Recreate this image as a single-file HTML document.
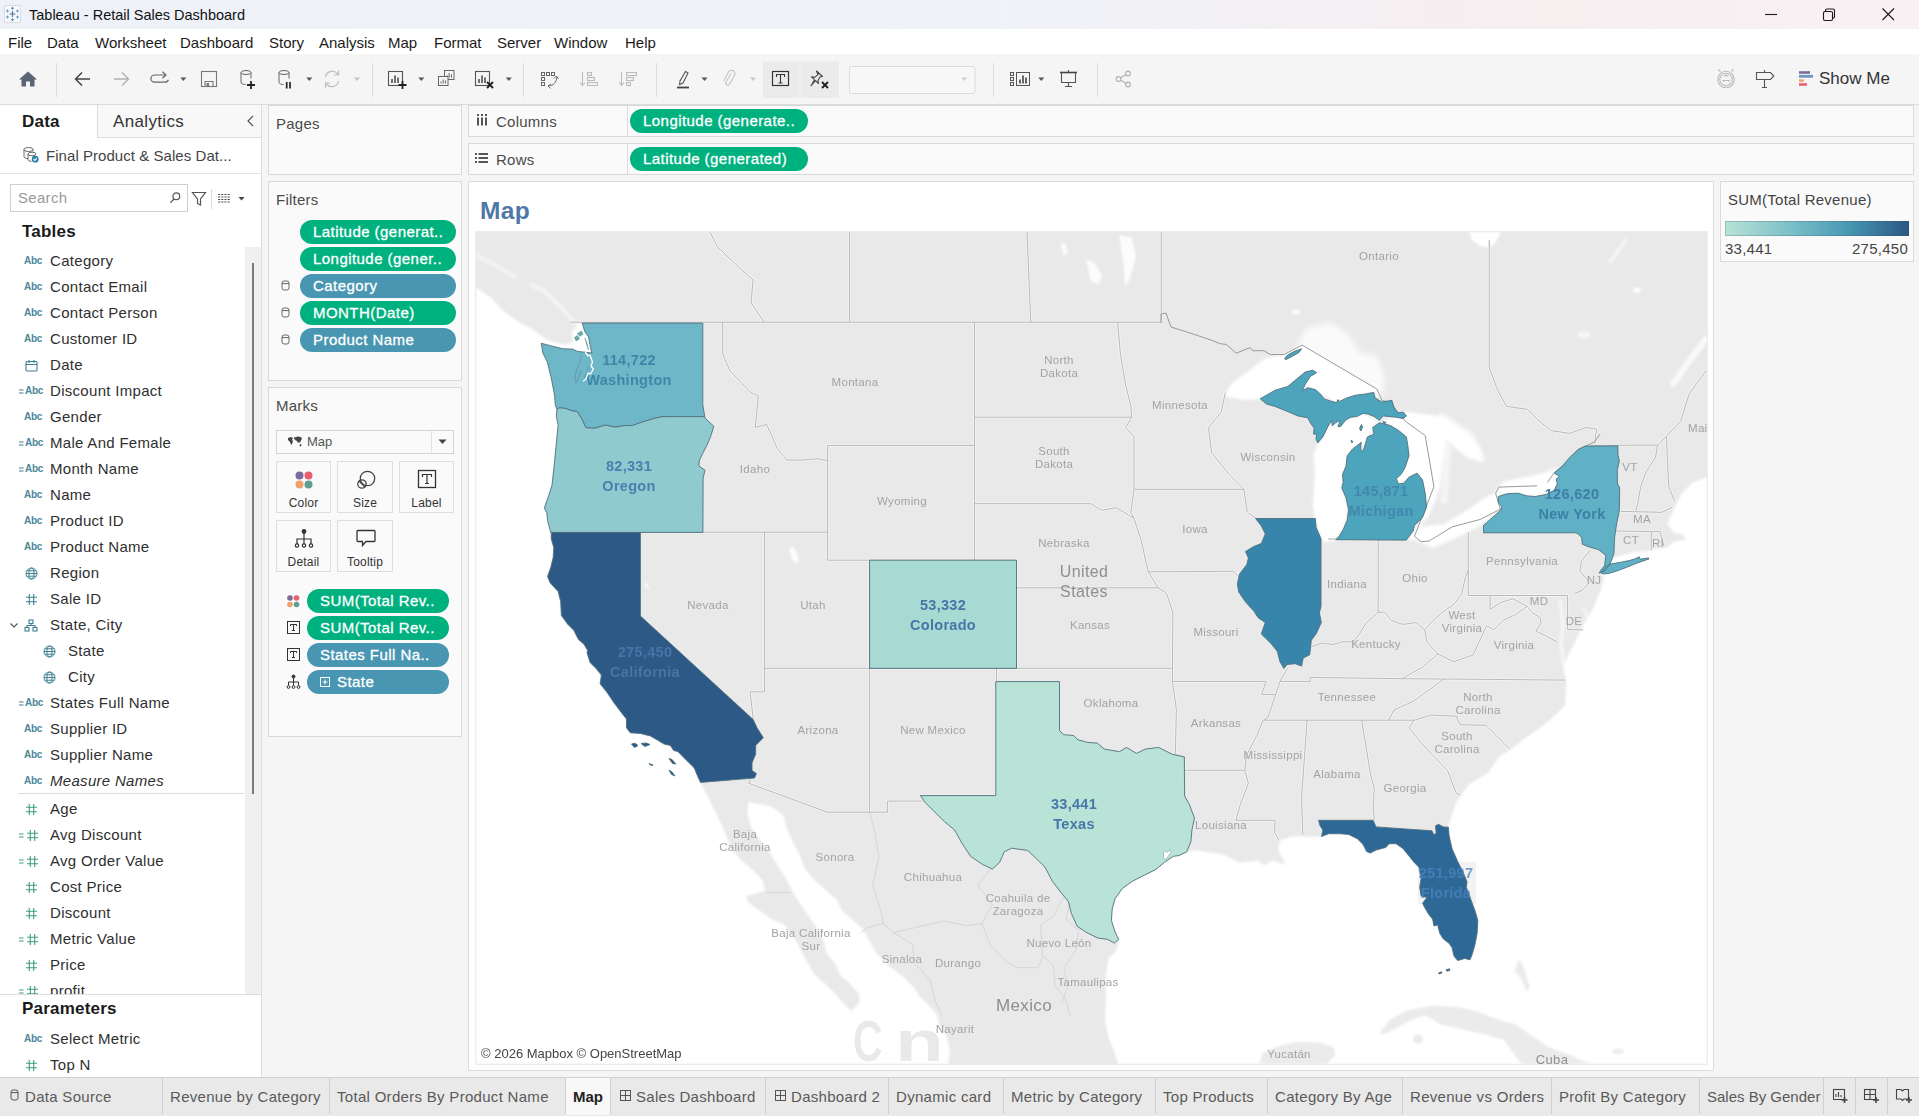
<!DOCTYPE html><html><head><meta charset="utf-8"><title>Tableau - Retail Sales Dashboard</title><style>
*{box-sizing:border-box;margin:0;padding:0}
html,body{width:1919px;height:1116px;overflow:hidden;background:#f5f5f5;font-family:"Liberation Sans",sans-serif;color:#333}
.a{position:absolute;white-space:nowrap}
.t15{font-size:15px;letter-spacing:.25px;line-height:18px}
#title{left:0;top:0;width:1919px;height:29px;background:linear-gradient(90deg,#eef2f8 0%,#eff3f9 50%,#f7eef0 80%,#f9f1f3 100%)}
#menu{left:0;top:29px;width:1919px;height:25px;background:#fff}
#menu span{position:absolute;top:5px;font-size:15px;color:#1b1b1b;letter-spacing:0}
#tool{left:0;top:54px;width:1919px;height:51px;background:#f5f5f5;border-bottom:1px solid #dcdcdc}
#left{left:0;top:105px;width:262px;height:972px;background:#fff;border-right:1px solid #dedede}
.card{background:#fafafa;border:1px solid #d9d9d9}
.pill{height:24px;border-radius:12px;color:#fff;font-size:15px;letter-spacing:.45px;line-height:23px;padding-left:13px;overflow:hidden;-webkit-text-stroke:.3px #fff}
.g{background:#00b180}.b{background:#4996b2}
.fi{position:absolute;left:0;height:26px;width:244px}
.fi .n{position:absolute;left:50px;top:4.5px;font-size:15px;letter-spacing:.3px;line-height:18px;color:#2f2f2f}
.abc{position:absolute;left:24px;top:7.5px;font-size:10px;font-weight:bold;color:#4a879a;letter-spacing:-.3px;line-height:12px}
.eq{position:absolute;left:19px;top:4px;font-size:9px;font-weight:bold;color:#3e7f93;line-height:12px}
.hash{position:absolute;left:25px;top:2px;font-size:15px;line-height:18px}
.btab{position:absolute;top:0;height:36px;border-right:1px solid #cfcfcf;font-size:15px;letter-spacing:.3px;line-height:38px;color:#5a5a5a;padding-left:7px}
.mbtn{position:absolute;width:55px;height:52px;background:#fafafa;border:1px solid #dedede;font-size:12px;text-align:center;color:#333}
.mbtn span{position:absolute;left:0;right:0;bottom:2px;line-height:14px;letter-spacing:.2px}
</style></head><body>
<div id="title" class="a">
<svg class="a" style="left:4px;top:5px" width="18" height="18" viewBox="0 0 18 18"><rect x="0.5" y="0.5" width="16" height="17" fill="#f6f8fb" stroke="#d9dde3"/><g stroke="#4a7aa8" stroke-width="1.2" fill="none"><path d="M8.5 6v6M5.5 9h6"/><path d="M8.5 1.8v3M7 3.3h3M8.5 13.2v3M7 14.7h3" stroke="#5b8fbf" stroke-width="1"/><path d="M3.5 4.5v3M2 6h3M13.5 4.5v3M12 6h3M3.5 10.5v3M2 12h3M13.5 10.5v3M12 12h3" stroke="#6aa0c8" stroke-width="1"/></g></svg>
<span class="a" style="left:29px;top:6px;font-size:14.5px;color:#111;line-height:18px">Tableau - Retail Sales Dashboard</span>
<svg class="a" style="left:1760px;top:4px" width="150" height="22" viewBox="0 0 150 22" fill="none" stroke="#1a1a1a" stroke-width="1.1"><path d="M5 10.5h12"/><rect x="63.5" y="7.5" width="9" height="9" rx="1.5"/><path d="M65.5 7.5v-1a1.5 1.5 0 0 1 1.5-1.5h6a1.5 1.5 0 0 1 1.5 1.5v6a1.5 1.5 0 0 1-1.5 1.5h-.5"/><path d="M122.5 4.5l11.5 11.5M134 4.5l-11.5 11.5"/></svg>
</div>
<div id="menu" class="a">
<span style="left:8px">File</span>
<span style="left:47px">Data</span>
<span style="left:95px">Worksheet</span>
<span style="left:180px">Dashboard</span>
<span style="left:269px">Story</span>
<span style="left:319px">Analysis</span>
<span style="left:388px">Map</span>
<span style="left:434px">Format</span>
<span style="left:497px">Server</span>
<span style="left:554px">Window</span>
<span style="left:625px">Help</span>
</div>
<div id="tool" class="a">
<svg class="a" style="left:0;top:0" width="1919" height="51" viewBox="0 54 1919 51" fill="none" stroke-linecap="butt">
<rect x="763" y="61.500" width="37" height="36.500" fill="#ebebeb"/><rect x="800" y="61.500" width="39" height="36.500" fill="#ebebeb"/><path d="M800 61.500v36.500" stroke="#f3f3f3"/>
<path d="M56.5 63v34" stroke="#dcdcdc" stroke-width="1"/>
<path d="M372.5 63v34" stroke="#dcdcdc" stroke-width="1"/>
<path d="M523.5 63v34" stroke="#dcdcdc" stroke-width="1"/>
<path d="M656.5 63v34" stroke="#dcdcdc" stroke-width="1"/>
<path d="M993.5 63v34" stroke="#dcdcdc" stroke-width="1"/>
<path d="M1097.5 63v34" stroke="#dcdcdc" stroke-width="1"/>
<path d="M28 71.500l-9 8h2.500v7h4.500v-5h4v5h4.500v-7h2.500z" fill="#5b6573"/>
<path d="M90 79h-14.500M82 72.500L75.500 79l6.500 6.500" stroke="#444" stroke-width="1.500"/>
<path d="M114 79h14.500M122 72.500l6.500 6.500-6.500 6.500" stroke="#b3b3b3" stroke-width="1.500"/>
<path d="M165.500 75h-11a3.600 3.600 0 0 0 0 7.200h10.500a3.600 3.600 0 0 0 3.400-2.400" stroke="#666" stroke-width="1.200"/><path d="M162.500 71.800l3.500 3.200-3.500 3.200" stroke="#666" stroke-width="1.200"/>
<path d="M180.3 77.5h6l-3 3.600z" fill="#555"/>
<rect x="201.500" y="71.500" width="15" height="15" stroke="#777" stroke-width="1.100"/><path d="M205 86.500v-5h8v5" stroke="#777" stroke-width="1.100"/><rect x="206.500" y="83" width="2.500" height="3" fill="#777"/>
<ellipse cx="246" cy="72.5" rx="5" ry="2" stroke="#666" stroke-width="1"/><path d="M241 72.5v10c0 1.200 2 2 4.500 2M251 72.5v6" stroke="#666" stroke-width="1"/>
<path d="M251 81v8M247 85h8" stroke="#222" stroke-width="1.800"/>
<ellipse cx="284" cy="72.5" rx="5" ry="2" stroke="#666" stroke-width="1"/><path d="M279 72.5v10c0 1.200 2 2 4.500 2M289 72.5v6" stroke="#666" stroke-width="1"/>
<path d="M286.700 82v6.500M290 82v6.500" stroke="#222" stroke-width="1.700"/>
<path d="M306.3 77.5h6l-3 3.600z" fill="#555"/>
<path d="M325.500 77a6.800 6.800 0 0 1 12.500-2.500M338.500 81a6.800 6.800 0 0 1-12.500 2.500" stroke="#bcbcbc" stroke-width="1.200"/><path d="M338.500 70.500v4.500h-4.500M325.500 87.500v-4.500h4.500" stroke="#bcbcbc" stroke-width="1.200"/>
<path d="M354 77.5h6l-3 3.600z" fill="#c4c4c4"/>
<rect x="388.500" y="71.500" width="14" height="14" stroke="#555" stroke-width="1.100"/><path d="M392 83v-4M395 83v-7.500M398 83v-5.500" stroke="#444" stroke-width="1.500"/><path d="M402.500 81v8M398.500 85h8" stroke="#222" stroke-width="1.800"/>
<path d="M418.3 77.5h6l-3 3.600z" fill="#555"/>
<rect x="444.500" y="70.500" width="9.500" height="9" fill="#f5f5f5" stroke="#666" stroke-width="1"/><path d="M447 77.500v-2M449.200 77.500v-4.500M451.500 77.500v-3" stroke="#666" stroke-width="1"/><rect x="438.500" y="76.500" width="9.500" height="9" fill="#f5f5f5" stroke="#666" stroke-width="1"/><path d="M441 83.500v-2M443.200 83.500v-4M445.500 83.500v-3" stroke="#666" stroke-width="1"/>
<rect x="475.500" y="71.500" width="14" height="14" stroke="#555" stroke-width="1.100"/><path d="M479 83v-4M482 83v-7.500M485 83v-5.500" stroke="#444" stroke-width="1.500"/><path d="M487 82l6 6M493 82l-6 6" stroke="#222" stroke-width="1.800"/>
<path d="M505.8 77.5h6l-3 3.600z" fill="#555"/>
<g stroke="#666" stroke-width="1"><rect x="541.500" y="72.500" width="3" height="3"/><rect x="546.500" y="72.500" width="3" height="3"/><rect x="551.500" y="72.500" width="3" height="3"/><rect x="541.500" y="77.500" width="3" height="3"/><rect x="541.500" y="82.500" width="3" height="3"/><path d="M556.500 77.500c0 5-3 8-8 8.500" /><path d="M554 78.500l2.500-2.500 2 3M551 84l-3 2 2.500 2.500"/></g>
<g stroke="#bcbcbc" stroke-width="1.100"><path d="M582.500 72v13M580 82.500l2.500 3 2.500-3"/><rect x="587.500" y="72.500" width="4" height="3"/><rect x="587.500" y="77.500" width="7" height="3"/><rect x="587.500" y="82.500" width="10" height="3"/></g>
<g stroke="#bcbcbc" stroke-width="1.100"><path d="M621.500 72v13M619 82.500l2.500 3 2.500-3"/><rect x="626.500" y="72.500" width="10" height="3"/><rect x="626.500" y="77.500" width="7" height="3"/><rect x="626.500" y="82.500" width="4" height="3"/></g>
<path d="M685.500 71.500l2.500 1.500-5 10-3.500 1.500.500-3.500z" stroke="#555" stroke-width="1.100"/><path d="M677 87.500h12" stroke="#444" stroke-width="1.800"/>
<path d="M701.5 77.5h6l-3 3.600z" fill="#555"/>
<path d="M731 73.500l-5 8.500a2 2 0 0 0 3.500 2l5-8.500a3.400 3.400 0 0 0-6-3.400l-5 8.800" stroke="#c2c2c2" stroke-width="1.100"/>
<path d="M750 77.5h6l-3 3.600z" fill="#c8c8c8"/>
<rect x="772.500" y="71.500" width="16" height="14" stroke="#333" stroke-width="1.200"/><path d="M776.500 77v-2.500h8v2.500M780.500 74.500v8.500M778.500 83h4" stroke="#333" stroke-width="1.100"/>
<path d="M816.500 71l6 5.500-2.500.500-2 3.500.500 3-3-2.800-4.500 5 .300-.200 3.200-5.800-3-2.800 3.500.300 3-2.500z" stroke="#444" stroke-width="1.100" stroke-linejoin="round"/><path d="M822 82l6 6M828 82l-6 6" stroke="#222" stroke-width="1.800"/>
<rect x="849.500" y="66.500" width="125.500" height="27" rx="2" fill="#f7f7f7" stroke="#dadada"/>
<path d="M961.3 77.5h6l-3 3.600z" fill="#cfcfcf"/>
<g stroke="#555" stroke-width="1"><rect x="1010.500" y="72.500" width="3" height="3"/><rect x="1010.500" y="77.500" width="3" height="3"/><rect x="1010.500" y="82.500" width="3" height="3"/><rect x="1016.500" y="72.500" width="13" height="13"/></g><path d="M1020 83.500v-4M1023 83.500v-8M1026 83.500v-6" stroke="#444" stroke-width="1.600"/>
<path d="M1038.3 77.5h6l-3 3.600z" fill="#555"/>
<path d="M1060 72.500h17" stroke="#444" stroke-width="1.600"/><path d="M1061.500 73v9.500h14v-9.500M1068.500 82.500v4M1065 86.500h7M1068.500 70v2.500" stroke="#555" stroke-width="1.100"/>
<g stroke="#b0b0b0" stroke-width="1.100"><circle cx="1118.500" cy="79" r="2.400"/><circle cx="1128" cy="73.500" r="2.400"/><circle cx="1128" cy="84.500" r="2.400"/><path d="M1120.600 77.800l5.300-3.100M1120.600 80.200l5.300 3.100"/></g>
<g stroke="#b8b8b8" stroke-width="1.100"><circle cx="1726" cy="79.500" r="8.200"/><circle cx="1726" cy="79.500" r="6.200"/><path d="M1720.500 71.500l-2-2M1731.500 71.500l2-2M1722.500 80.500h7M1723.500 80v2M1728.500 80v2M1724 76.500c1-1.500 3-1.500 4 0"/></g>
<path d="M1756.500 72.500h14l3.300 3.500-3.300 3.500h-14zM1764.500 70v2.500M1764.500 79.500v8M1762 87.500h5" stroke="#555" stroke-width="1.100"/>
<rect x="1799" y="71.200" width="11" height="2.600" fill="#7b6b99"/><rect x="1799" y="74.900" width="14" height="2.800" fill="#6e94c4"/><rect x="1799" y="79.400" width="4.800" height="2.400" fill="#f0a06a"/><rect x="1799" y="83.200" width="8" height="2.600" fill="#e8606f"/>
</svg>
<span class="a" style="left:1819px;top:15px;font-size:17px;color:#333;line-height:20px">Show Me</span>
</div>
<div id="left" class="a">
<span class="a" style="left:22px;top:7px;font-size:17px;font-weight:bold;color:#1a1a1a;line-height:20px;letter-spacing:.2px">Data</span>
<div class="a" style="left:97px;top:0;width:165px;height:33px;background:#f8f8f8;border:1px solid #dcdcdc;border-top:none"></div>
<span class="a" style="left:113px;top:7px;font-size:17px;color:#333;line-height:20px;letter-spacing:.35px">Analytics</span>
<svg class="a" style="left:245px;top:9px" width="10" height="14" viewBox="0 0 10 14" fill="none" stroke="#555" stroke-width="1.2"><path d="M8 2L3 7l5 5"/></svg>
<svg class="a" style="left:22px;top:41px" width="18" height="18" viewBox="0 0 18 18" fill="none" stroke="#666" stroke-width="1"><ellipse cx="6.5" cy="3.5" rx="4.5" ry="2"/><path d="M2 3.5v7c0 1 1.5 2 4 2M11 3.5v2"/><ellipse cx="10" cy="8" rx="4" ry="1.8"/><path d="M6 8v5.5c0 1 1.5 1.8 3.5 1.8"/><circle cx="13.2" cy="13.2" r="3.4" fill="#2e7fa8" stroke="none"/><path d="M11.6 13.2l1.2 1.2 2-2.2" stroke="#fff" stroke-width="1.1"/></svg>
<span class="a" style="left:46px;top:42px;font-size:15px;color:#444;line-height:18px;letter-spacing:.05px">Final Product &amp; Sales Dat...</span>
<div class="a" style="left:0;top:68px;width:261px;height:1px;background:#e3e3e3"></div>
<div class="a" style="left:10px;top:79px;width:178px;height:28px;border:1px solid #cfcfcf;background:#fff"></div>
<span class="a" style="left:18px;top:84px;font-size:15px;color:#9a9a9a;line-height:18px;letter-spacing:.3px">Search</span>
<svg class="a" style="left:168px;top:86px" width="14" height="14" viewBox="0 0 14 14" fill="none" stroke="#555" stroke-width="1.2"><circle cx="8.3" cy="5.3" r="3.4"/><path d="M6 8L2.3 11.8"/></svg>
<svg class="a" style="left:190px;top:84px" width="60" height="20" viewBox="0 0 60 20" fill="none" stroke="#555" stroke-width="1.2"><path d="M2.5 3.5h13l-5 6.5v6l-3-1.5v-4.5z"/><path d="M21.5 0v20" stroke="#ddd"/><g stroke="#555" stroke-width="1"><path d="M28 5.5h12M28 8h12M28 10.5h12M28 13h12" stroke-dasharray="2.2 1"/></g><path d="M48.5 8h6l-3 3.5z" fill="#444" stroke="none"/></svg>
<span class="a" style="left:22px;top:117px;font-size:17px;font-weight:bold;color:#1a1a1a;line-height:20px;letter-spacing:.2px">Tables</span>
<div class="a" style="left:245px;top:142px;width:16px;height:747px;background:#f0f0f0"></div>
<div class="a" style="left:252px;top:158px;width:2px;height:531px;background:#7a7a7a"></div>
<div class="fi" style="top:142px"><span class="abc">Abc</span><span class="n" style="left:50px;">Category</span></div>
<div class="fi" style="top:168px"><span class="abc">Abc</span><span class="n" style="left:50px;">Contact Email</span></div>
<div class="fi" style="top:194px"><span class="abc">Abc</span><span class="n" style="left:50px;">Contact Person</span></div>
<div class="fi" style="top:220px"><span class="abc">Abc</span><span class="n" style="left:50px;">Customer ID</span></div>
<div class="fi" style="top:246px"><svg style="position:absolute;left:25px;top:7.5px" width="13" height="13" viewBox="0 0 13 13" fill="none" stroke="#3e7f93" stroke-width="1.1"><rect x="1" y="2.5" width="11" height="9.5" rx="1"/><path d="M1 5.5h11M4 1v3M9 1v3"/></svg><span class="n" style="left:50px;">Date</span></div>
<div class="fi" style="top:272px"><svg style="position:absolute;left:19px;top:11.5px" width="5" height="5" viewBox="0 0 5 5" stroke="#3e7f93" stroke-width="1.2"><path d="M0 1h4.5M0 4h4.5"/></svg><span class="abc" style="left:25px">Abc</span><span class="n" style="left:50px;">Discount Impact</span></div>
<div class="fi" style="top:298px"><span class="abc">Abc</span><span class="n" style="left:50px;">Gender</span></div>
<div class="fi" style="top:324px"><svg style="position:absolute;left:19px;top:11.5px" width="5" height="5" viewBox="0 0 5 5" stroke="#3e7f93" stroke-width="1.2"><path d="M0 1h4.5M0 4h4.5"/></svg><span class="abc" style="left:25px">Abc</span><span class="n" style="left:50px;">Male And Female</span></div>
<div class="fi" style="top:350px"><svg style="position:absolute;left:19px;top:11.5px" width="5" height="5" viewBox="0 0 5 5" stroke="#3e7f93" stroke-width="1.2"><path d="M0 1h4.5M0 4h4.5"/></svg><span class="abc" style="left:25px">Abc</span><span class="n" style="left:50px;">Month Name</span></div>
<div class="fi" style="top:376px"><span class="abc">Abc</span><span class="n" style="left:50px;">Name</span></div>
<div class="fi" style="top:402px"><span class="abc">Abc</span><span class="n" style="left:50px;">Product ID</span></div>
<div class="fi" style="top:428px"><span class="abc">Abc</span><span class="n" style="left:50px;">Product Name</span></div>
<div class="fi" style="top:454px"><svg style="position:absolute;left:25px;top:7.5px" width="13" height="13" viewBox="0 0 13 13" fill="none" stroke="#3e7f93" stroke-width="1"><circle cx="6.5" cy="6.5" r="5.5"/><ellipse cx="6.5" cy="6.5" rx="2.6" ry="5.5"/><path d="M1 6.5h11M1.8 3.8h9.4M1.8 9.2h9.4"/></svg><span class="n" style="left:50px;">Region</span></div>
<div class="fi" style="top:480px"><svg style="position:absolute;left:25px;top:7.5px" width="13" height="13" viewBox="0 0 13 13" fill="none" stroke="#3e7f93" stroke-width="1.1"><path d="M4.3 1v11M8.7 1v11M1 4.3h11M1 8.7h11"/></svg><span class="n" style="left:50px;">Sale ID</span></div>
<div class="fi" style="top:506px"><svg style="position:absolute;left:24px;top:7.5px" width="14" height="13" viewBox="0 0 14 13" fill="none" stroke="#3e7f93" stroke-width="1.1"><rect x="5" y="1" width="4" height="3.5"/><rect x="1" y="8.5" width="4" height="3.5"/><rect x="9" y="8.5" width="4" height="3.5"/><path d="M7 4.5v2M3 8.5v-2h8v2"/></svg><svg style="position:absolute;left:9px;top:10.5px" width="10" height="7" viewBox="0 0 10 7" fill="none" stroke="#555" stroke-width="1.1"><path d="M1.5 1.5L5 5l3.5-3.5"/></svg><span class="n" style="left:50px;">State, City</span></div>
<div class="fi" style="top:532px"><svg style="position:absolute;left:43px;top:7.5px" width="13" height="13" viewBox="0 0 13 13" fill="none" stroke="#3e7f93" stroke-width="1"><circle cx="6.5" cy="6.5" r="5.5"/><ellipse cx="6.5" cy="6.5" rx="2.6" ry="5.5"/><path d="M1 6.5h11M1.8 3.8h9.4M1.8 9.2h9.4"/></svg><span class="n" style="left:68px;">State</span></div>
<div class="fi" style="top:558px"><svg style="position:absolute;left:43px;top:7.5px" width="13" height="13" viewBox="0 0 13 13" fill="none" stroke="#3e7f93" stroke-width="1"><circle cx="6.5" cy="6.5" r="5.5"/><ellipse cx="6.5" cy="6.5" rx="2.6" ry="5.5"/><path d="M1 6.5h11M1.8 3.8h9.4M1.8 9.2h9.4"/></svg><span class="n" style="left:68px;">City</span></div>
<div class="fi" style="top:584px"><svg style="position:absolute;left:19px;top:11.5px" width="5" height="5" viewBox="0 0 5 5" stroke="#3e7f93" stroke-width="1.2"><path d="M0 1h4.5M0 4h4.5"/></svg><span class="abc" style="left:25px">Abc</span><span class="n" style="left:50px;">States Full Name</span></div>
<div class="fi" style="top:610px"><span class="abc">Abc</span><span class="n" style="left:50px;">Supplier ID</span></div>
<div class="fi" style="top:636px"><span class="abc">Abc</span><span class="n" style="left:50px;">Supplier Name</span></div>
<div class="fi" style="top:662px"><span class="abc">Abc</span><span class="n" style="left:50px;font-style:italic;">Measure Names</span></div>
<div class="a" style="left:18px;top:688px;width:226px;height:1px;background:#dcdcdc"></div>
<div class="a" style="left:0;top:689px;width:245px;height:200px;overflow:hidden">
<div class="fi" style="top:1px"><svg style="position:absolute;left:25px;top:7.5px" width="13" height="13" viewBox="0 0 13 13" fill="none" stroke="#3f9d7c" stroke-width="1.1"><path d="M4.3 1v11M8.7 1v11M1 4.3h11M1 8.7h11"/></svg><span class="n" style="left:50px;">Age</span></div>
<div class="fi" style="top:27px"><svg style="position:absolute;left:19px;top:11.5px" width="5" height="5" viewBox="0 0 5 5" stroke="#3f9d7c" stroke-width="1.2"><path d="M0 1h4.5M0 4h4.5"/></svg><svg style="position:absolute;left:26px;top:7.5px" width="13" height="13" viewBox="0 0 13 13" fill="none" stroke="#3f9d7c" stroke-width="1.1"><path d="M4.3 1v11M8.7 1v11M1 4.3h11M1 8.7h11"/></svg><span class="n" style="left:50px;">Avg Discount</span></div>
<div class="fi" style="top:53px"><svg style="position:absolute;left:19px;top:11.5px" width="5" height="5" viewBox="0 0 5 5" stroke="#3f9d7c" stroke-width="1.2"><path d="M0 1h4.5M0 4h4.5"/></svg><svg style="position:absolute;left:26px;top:7.5px" width="13" height="13" viewBox="0 0 13 13" fill="none" stroke="#3f9d7c" stroke-width="1.1"><path d="M4.3 1v11M8.7 1v11M1 4.3h11M1 8.7h11"/></svg><span class="n" style="left:50px;">Avg Order Value</span></div>
<div class="fi" style="top:79px"><svg style="position:absolute;left:25px;top:7.5px" width="13" height="13" viewBox="0 0 13 13" fill="none" stroke="#3f9d7c" stroke-width="1.1"><path d="M4.3 1v11M8.7 1v11M1 4.3h11M1 8.7h11"/></svg><span class="n" style="left:50px;">Cost Price</span></div>
<div class="fi" style="top:105px"><svg style="position:absolute;left:25px;top:7.5px" width="13" height="13" viewBox="0 0 13 13" fill="none" stroke="#3f9d7c" stroke-width="1.1"><path d="M4.3 1v11M8.7 1v11M1 4.3h11M1 8.7h11"/></svg><span class="n" style="left:50px;">Discount</span></div>
<div class="fi" style="top:131px"><svg style="position:absolute;left:19px;top:11.5px" width="5" height="5" viewBox="0 0 5 5" stroke="#3f9d7c" stroke-width="1.2"><path d="M0 1h4.5M0 4h4.5"/></svg><svg style="position:absolute;left:26px;top:7.5px" width="13" height="13" viewBox="0 0 13 13" fill="none" stroke="#3f9d7c" stroke-width="1.1"><path d="M4.3 1v11M8.7 1v11M1 4.3h11M1 8.7h11"/></svg><span class="n" style="left:50px;">Metric Value</span></div>
<div class="fi" style="top:157px"><svg style="position:absolute;left:25px;top:7.5px" width="13" height="13" viewBox="0 0 13 13" fill="none" stroke="#3f9d7c" stroke-width="1.1"><path d="M4.3 1v11M8.7 1v11M1 4.3h11M1 8.7h11"/></svg><span class="n" style="left:50px;">Price</span></div>
<div class="fi" style="top:183px"><svg style="position:absolute;left:19px;top:11.5px" width="5" height="5" viewBox="0 0 5 5" stroke="#3f9d7c" stroke-width="1.2"><path d="M0 1h4.5M0 4h4.5"/></svg><svg style="position:absolute;left:26px;top:7.5px" width="13" height="13" viewBox="0 0 13 13" fill="none" stroke="#3f9d7c" stroke-width="1.1"><path d="M4.3 1v11M8.7 1v11M1 4.3h11M1 8.7h11"/></svg><span class="n" style="left:50px;">profit</span></div>
</div>
<div class="a" style="left:0;top:889px;width:261px;height:1px;background:#dcdcdc"></div>
<span class="a" style="left:22px;top:894px;font-size:17px;font-weight:bold;color:#1a1a1a;line-height:20px;letter-spacing:.2px">Parameters</span>
<div class="fi" style="top:920px"><span class="abc">Abc</span><span class="n" style="left:50px;">Select Metric</span></div>
<div class="fi" style="top:946px"><svg style="position:absolute;left:25px;top:7.5px" width="13" height="13" viewBox="0 0 13 13" fill="none" stroke="#3f9d7c" stroke-width="1.1"><path d="M4.3 1v11M8.7 1v11M1 4.3h11M1 8.7h11"/></svg><span class="n" style="left:50px;">Top N</span></div>
</div>
<div class="a card" style="left:268px;top:105px;width:194px;height:70px"></div><span class="a t15" style="left:276px;top:115px;color:#4a4a4a">Pages</span>
<div class="a card" style="left:268px;top:181px;width:194px;height:200px"></div><span class="a t15" style="left:276px;top:191px;color:#4a4a4a">Filters</span>
<div class="a pill g" style="left:300px;top:220px;width:156px">Latitude (generat..</div>
<div class="a pill g" style="left:300px;top:247px;width:156px">Longitude (gener..</div>
<div class="a pill b" style="left:300px;top:274px;width:156px">Category</div>
<svg class="a" style="left:281px;top:280px" width="9" height="11" viewBox="0 0 9 11" fill="none" stroke="#666" stroke-width="1"><rect x="1" y="1" width="7" height="9" rx="2.2"/><path d="M1 3.6h7"/></svg>
<div class="a pill g" style="left:300px;top:301px;width:156px">MONTH(Date)</div>
<svg class="a" style="left:281px;top:307px" width="9" height="11" viewBox="0 0 9 11" fill="none" stroke="#666" stroke-width="1"><rect x="1" y="1" width="7" height="9" rx="2.2"/><path d="M1 3.6h7"/></svg>
<div class="a pill b" style="left:300px;top:328px;width:156px">Product Name</div>
<svg class="a" style="left:281px;top:334px" width="9" height="11" viewBox="0 0 9 11" fill="none" stroke="#666" stroke-width="1"><rect x="1" y="1" width="7" height="9" rx="2.2"/><path d="M1 3.6h7"/></svg>
<div class="a card" style="left:268px;top:387px;width:194px;height:350px"></div><span class="a t15" style="left:276px;top:397px;color:#4a4a4a">Marks</span>
<div class="a" style="left:276px;top:430px;width:178px;height:24px;background:#fafafa;border:1px solid #d4d4d4"></div><div class="a" style="left:431px;top:431px;width:1px;height:22px;background:#e2e2e2"></div>
<svg class="a" style="left:287px;top:436px" width="16" height="12" viewBox="0 0 16 12" fill="#444"><path d="M1 2l3-1 2 1-1 2 1 1-1 3-1 1-1-3-2-2zM7 1l2 .5 1-1 4 .5 1 2-1 1-1 3-1-1-1 1-1-2-2-1-1-2zM13 8l1.5.5-.5 2-1.5-.5z"/></svg>
<span class="a" style="left:307px;top:434px;font-size:13px;color:#555;line-height:16px">Map</span>
<svg class="a" style="left:438px;top:439px" width="9" height="6" viewBox="0 0 9 6"><path d="M0.5 0.5h8l-4 4.5z" fill="#444"/></svg>
<div class="mbtn" style="left:276px;top:461px"><svg style="position:absolute;left:16px;top:7px" width="22" height="22" viewBox="0 0 22 22"><circle cx="6.5" cy="6.5" r="4" fill="#7b6b99"/><circle cx="15.5" cy="6.5" r="4" fill="#e8606f"/><circle cx="6.5" cy="15.5" r="4" fill="#f0a06a"/><circle cx="15.5" cy="15.5" r="4" fill="#5f9e94"/></svg><span>Color</span></div>
<div class="mbtn" style="left:337px;top:461px;width:56px"><svg style="position:absolute;left:17px;top:7px" width="22" height="22" viewBox="0 0 22 22" fill="none" stroke="#444" stroke-width="1.3"><circle cx="12.5" cy="9.5" r="7.2"/><circle cx="7" cy="15" r="4.2"/><path d="M4 12l6 6"/></svg><span>Size</span></div>
<div class="mbtn" style="left:399px;top:461px"><svg style="position:absolute;left:17px;top:7px" width="20" height="20" viewBox="0 0 20 20" fill="none" stroke="#333" stroke-width="1.3"><rect x="1.5" y="1.5" width="17" height="17"/><path d="M5.5 8V5.5h9V8M10 5.5v9M8 14.5h4" stroke-width="1.2"/></svg><span>Label</span></div>
<div class="mbtn" style="left:276px;top:520px"><svg style="position:absolute;left:16px;top:7px" width="22" height="22" viewBox="0 0 22 22" fill="none" stroke="#333" stroke-width="1.2"><circle cx="11" cy="3.5" r="1.8" fill="#333"/><path d="M11 5v6M4 16v-5h14v5M11 11v5"/><circle cx="4" cy="17.5" r="1.7"/><circle cx="11" cy="17.5" r="1.7"/><circle cx="18" cy="17.5" r="1.7"/></svg><span>Detail</span></div>
<div class="mbtn" style="left:337px;top:520px;width:56px"><svg style="position:absolute;left:17px;top:7px" width="22" height="22" viewBox="0 0 22 22" fill="none" stroke="#333" stroke-width="1.3"><path d="M3 2.5h16a1 1 0 0 1 1 1v9a1 1 0 0 1-1 1h-8l-3.5 4v-4h-4.500a1 1 0 0 1-1-1v-9a1 1 0 0 1 1-1z"/></svg><span>Tooltip</span></div>
<svg class="a" style="left:286px;top:594px" width="14" height="14" viewBox="0 0 14 14"><circle cx="4" cy="4" r="2.8" fill="#7b6b99"/><circle cx="10.500" cy="4" r="2.8" fill="#e8606f"/><circle cx="4" cy="10.5" r="2.8" fill="#f0a06a"/><circle cx="10.5" cy="10.5" r="2.8" fill="#5f9e94"/></svg>
<svg class="a" style="left:287px;top:621px" width="13" height="13" viewBox="0 0 13 13" fill="none" stroke="#333" stroke-width="1"><rect x=".5" y=".5" width="12" height="12"/><path d="M3.5 5V3.5h6V5M6.500 3.5v6M5 9.500h3"/></svg>
<svg class="a" style="left:287px;top:648px" width="13" height="13" viewBox="0 0 13 13" fill="none" stroke="#333" stroke-width="1"><rect x=".5" y=".5" width="12" height="12"/><path d="M3.5 5V3.5h6V5M6.500 3.5v6M5 9.500h3"/></svg>
<svg class="a" style="left:286px;top:674px" width="15" height="16" viewBox="0 0 15 16" fill="none" stroke="#333" stroke-width="1"><circle cx="7.5" cy="2.5" r="1.500" fill="#333"/><path d="M7.500 4v4M2.500 11.500V8h10v3.5M7.500 8v3.5"/><circle cx="2.500" cy="13" r="1.4"/><circle cx="7.500" cy="13" r="1.4"/><circle cx="12.500" cy="13" r="1.4"/></svg>
<div class="a pill g" style="left:307px;top:589px;width:142px">SUM(Total Rev..</div>
<div class="a pill g" style="left:307px;top:616px;width:142px">SUM(Total Rev..</div>
<div class="a pill b" style="left:307px;top:643px;width:142px">States Full Na..</div>
<div class="a pill b" style="left:307px;top:670px;width:142px;padding-left:30px">State</div><svg class="a" style="left:320px;top:677px" width="10" height="10" viewBox="0 0 10 10" fill="none" stroke="#fff" stroke-width="1"><rect x=".5" y=".5" width="9" height="9"/><path d="M5 2.5v5M2.5 5h5"/></svg>
<div class="a card" style="left:468px;top:105px;width:1446px;height:32px"></div><div class="a" style="left:627px;top:106px;width:1px;height:30px;background:#dcdcdc"></div>
<svg class="a" style="left:476px;top:114px" width="12" height="12" viewBox="0 0 12 12" fill="#555"><rect x="1" y="0" width="2" height="2"/><rect x="5" y="0" width="2" height="2"/><rect x="9" y="0" width="2" height="2"/><rect x="1" y="3.500" width="2" height="8"/><rect x="5" y="3.500" width="2" height="8"/><rect x="9" y="3.500" width="2" height="8"/></svg>
<span class="a t15" style="left:496px;top:113px;color:#4a4a4a">Columns</span>
<div class="a pill g" style="left:630px;top:109px;width:178px">Longitude (generate..</div>
<div class="a card" style="left:468px;top:143px;width:1446px;height:32px"></div><div class="a" style="left:627px;top:144px;width:1px;height:30px;background:#dcdcdc"></div>
<svg class="a" style="left:475px;top:152px" width="14" height="12" viewBox="0 0 14 12" fill="#555"><rect x="0" y="1" width="2" height="2"/><rect x="0" y="5" width="2" height="2"/><rect x="0" y="9" width="2" height="2"/><rect x="3.500" y="1" width="9.500" height="2"/><rect x="3.500" y="5" width="9.500" height="2"/><rect x="3.500" y="9" width="9.500" height="2"/></svg>
<span class="a t15" style="left:496px;top:151px;color:#4a4a4a">Rows</span>
<div class="a pill g" style="left:630px;top:147px;width:178px">Latitude (generated)</div>
<div class="a" style="left:468px;top:181px;width:1246px;height:890px;background:#fff;border:1px solid #dcdcdc"></div>
<span class="a" style="left:480px;top:196px;font-size:24.5px;font-weight:bold;color:#4e79a7;line-height:30px;letter-spacing:.4px">Map</span>
<svg class="a" style="left:476px;top:232px;outline:1px solid #ececec" width="1231" height="832" viewBox="476 232 1231 832">
<defs><filter id="b1" x="-5%" y="-5%" width="110%" height="110%"><feGaussianBlur stdDeviation="0.8"/></filter><filter id="b3" x="-20%" y="-20%" width="140%" height="140%"><feGaussianBlur stdDeviation="3"/></filter><filter id="b2" x="-20%" y="-20%" width="140%" height="140%"><feGaussianBlur stdDeviation="1.6"/></filter></defs>
<rect x="476" y="232" width="1231" height="832" fill="#e9e9e9"/>
<!--TEX-->
<g fill="#fff" filter="url(#b1)"><path d="M476.0 287.4 L491.5 298.1 L502.3 310.0 L518.4 321.8 L534.5 330.4 L545.3 339.0 L556.0 342.5 L566.0 344.5 L573.0 342.3 L572.0 331.5 L577.3 326.1 L574.0 323.3 L582.2 323.1 L584.8 331.5 L588.6 336.9 L590.2 345.5 L591.8 353.0 L577.3 351.4 L573.0 349.2 L562.3 348.7 L551.5 346.0 L541.3 343.3 L542.9 353.0 L547.2 361.6 L551.0 376.7 L553.1 387.4 L554.7 396.0 L555.3 404.6 L556.9 409.5 L556.3 416.3 L558.2 425.1 L556.3 443.9 L554.5 462.7 L552.0 485.3 L548.8 495.4 L544.4 507.9 L546.9 512.9 L547.6 520.5 L550.7 532.4 L551.3 538.8 L553.8 547.6 L553.2 557.6 L550.7 567.7 L547.6 576.5 L550.1 582.7 L558.2 591.5 L560.7 601.6 L561.4 615.4 L567.6 624.1 L573.9 630.4 L578.3 639.2 L584.0 644.2 L587.7 650.5 L587.0 652.5 L590.1 662.5 L596.4 668.8 L601.4 675.1 L600.2 683.9 L606.4 691.4 L614.0 702.7 L621.5 712.7 L626.5 719.0 L626.5 727.8 L630.3 732.8 L640.3 733.4 L650.3 735.9 L657.9 740.3 L664.1 744.1 L670.4 745.4 L673.6 750.4 L677.9 751.6 L685.5 759.2 L694.3 767.9 L697.4 775.5 L700.5 782.4 L699.8 782.2 L704.4 789.8 L712.0 805.0 L719.6 820.3 L725.7 834.0 L731.8 849.2 L740.9 859.9 L751.6 869.0 L762.3 879.7 L765.3 890.4 L756.2 893.4 L745.5 896.4 L748.6 902.5 L759.2 910.2 L771.4 919.3 L783.6 923.9 L795.8 940.0 L805.0 958.4 L815.0 975.0 L831.7 990.0 L846.7 1006.7 L851.7 1010.9 L860.0 1001.7 L858.4 993.4 L850.0 983.4 L840.0 975.0 L835.0 963.4 L826.7 953.4 L823.2 940.0 L817.1 928.4 L809.5 917.8 L800.4 904.1 L792.7 891.9 L786.6 879.7 L779.0 867.5 L771.4 855.3 L762.3 843.1 L751.6 827.9 L747.0 812.7 L748.6 802.0 L753.1 802.8 L771.4 806.6 L783.6 815.7 L786.6 827.9 L792.7 841.6 L800.4 856.8 L804.9 869.0 L814.1 879.7 L826.3 890.4 L836.9 899.5 L841.5 910.2 L852.2 919.3 L862.8 928.4 L868.9 940.0 L876.7 953.4 L890.0 966.7 L903.4 976.7 L913.4 986.7 L920.0 996.7 L930.0 1006.7 L936.8 1015.0 L940.0 1026.7 L946.8 1036.7 L950.0 1050.0 L948.4 1064.0 L476.0 1064.0Z"/><path d="M1118.4 1064.0 L1113.4 1050.0 L1108.4 1036.7 L1105.0 1020.0 L1105.9 1003.4 L1105.9 975.0 L1108.4 958.4 L1116.7 950.0 L1119.2 940.0 L1118.7 939.4 L1115.1 932.1 L1111.4 920.5 L1112.2 908.8 L1115.1 898.6 L1122.4 888.4 L1132.6 881.1 L1144.3 875.2 L1155.9 869.4 L1164.7 862.1 L1173.4 856.3 L1179.1 855.5 L1186.6 851.9 L1197.6 850.2 L1210.2 852.7 L1222.7 854.0 L1230.3 857.8 L1240.3 862.8 L1250.3 861.5 L1257.9 860.3 L1264.1 865.3 L1272.9 860.3 L1280.5 863.5 L1285.5 864.0 L1281.0 856.0 L1277.9 849.0 L1280.5 840.2 L1291.7 836.4 L1303.0 836.4 L1310.6 837.1 L1321.5 836.5 L1321.5 836.5 L1328.7 833.7 L1340.1 833.7 L1348.7 834.4 L1357.3 838.7 L1363.1 844.4 L1366.7 851.6 L1370.3 853.0 L1376.0 850.1 L1386.0 847.3 L1388.9 843.7 L1396.1 843.7 L1403.2 848.7 L1409.0 855.9 L1414.7 863.0 L1419.0 867.3 L1421.1 878.8 L1419.7 887.4 L1421.1 896.0 L1426.9 897.5 L1422.6 903.2 L1424.7 907.5 L1429.0 914.7 L1432.6 919.0 L1434.1 926.1 L1437.6 924.7 L1439.8 933.3 L1443.4 939.0 L1449.1 943.3 L1452.0 947.6 L1454.1 956.2 L1457.7 960.5 L1464.9 958.4 L1469.9 959.8 L1472.0 954.8 L1474.9 944.8 L1477.1 933.3 L1477.8 920.4 L1474.9 910.4 L1470.6 898.9 L1466.3 887.4 L1467.0 881.7 L1463.4 873.1 L1457.7 861.6 L1452.0 848.7 L1449.1 835.8 L1448.4 827.2 L1449.0 823.7 L1456.3 802.0 L1468.4 785.0 L1487.7 772.9 L1499.8 756.0 L1511.9 748.7 L1524.0 739.0 L1541.0 727.0 L1555.5 714.9 L1565.2 705.2 L1566.4 681.0 L1562.8 666.5 L1570.0 651.9 L1577.3 637.4 L1584.5 622.9 L1594.2 606.0 L1600.3 591.5 L1603.9 576.9 L1600.3 572.1 L1604.5 565.8 L1609.9 564.4 L1613.8 557.7 L1631.7 552.3 L1649.6 550.5 L1667.5 547.0 L1674.7 541.6 L1686.0 539.5 L1683.0 535.0 L1673.0 532.0 L1667.5 523.7 L1674.7 507.5 L1681.9 493.2 L1692.6 482.4 L1707.0 477.0 L1707.0 1064.0Z"/></g>
<g fill="#ebebeb" filter="url(#b1)"><path d="M1260.0 1064.0 L1261.8 1053.4 L1276.8 1046.7 L1296.8 1041.7 L1320.1 1042.6 L1333.5 1046.7 L1335.1 1055.0 L1326.8 1064.0Z"/><path d="M1380.0 1032.9 L1388.9 1020.5 L1406.6 1010.7 L1433.2 1005.4 L1459.7 1007.2 L1477.5 1011.6 L1500.5 1020.5 L1514.7 1024.0 L1530.6 1034.7 L1548.3 1047.1 L1567.8 1054.1 L1583.8 1061.2 L1592.6 1064.0 L1521.7 1064.0 L1511.1 1050.6 L1504.0 1040.0 L1486.3 1034.7 L1468.6 1031.1 L1454.4 1027.6 L1438.5 1024.0 L1434.9 1020.5 L1424.3 1015.2 L1410.1 1020.5 L1397.7 1027.6 L1387.1 1032.9 L1380.0 1034.6Z"/><path d="M1518.2 960.2 L1514.7 970.9 L1521.7 979.7 L1527.1 992.1 L1529.7 986.8 L1525.3 972.6 L1521.5 962.0Z"/><ellipse cx="1418" cy="1039" rx="5" ry="4.500"/><ellipse cx="1618" cy="1051.500" rx="6" ry="2.500"/></g>
<g fill="#fff" filter="url(#b3)" opacity=".8"><path d="M1296.0 349.0 L1306.0 328.0 L1330.5 322.0 L1351.0 337.0 L1360.0 353.0 L1377.0 356.0 L1385.0 379.0 L1382.0 396.0Z"/></g>
<g fill="#fff" filter="url(#b2)"><path d="M1224.0 396.0 L1232.5 382.7 L1246.6 372.2 L1265.2 358.2 L1283.9 354.8 L1302.2 345.1 L1376.8 389.0 L1381.9 400.3 L1373.7 392.4 L1345.5 398.4 L1336.7 402.8 L1320.4 394.0 L1307.8 387.7 L1302.2 390.9 L1310.3 376.4 L1316.6 372.7 L1305.3 372.0 L1287.8 386.5 L1260.2 398.8 L1245.1 400.3 L1232.5 397.8Z"/><path d="M1379.0 421.0 L1363.0 413.4 L1345.5 420.3 L1331.7 420.3 L1322.9 436.7 L1317.9 442.9 L1313.6 454.4 L1314.9 474.5 L1313.6 490.6 L1312.9 504.1 L1314.9 518.9 L1319.0 531.0 L1321.0 539.0 L1324.4 542.4 L1333.8 541.0 L1335.8 539.7 L1343.2 529.6 L1348.5 509.5 L1341.8 488.0 L1345.9 466.5 L1352.6 449.0 L1364.7 446.3 L1372.7 427.5Z"/><path d="M1381.7 421.2 L1395.0 417.0 L1407.4 411.8 L1423.7 414.2 L1442.3 416.5 L1456.3 425.8 L1470.3 435.1 L1479.6 449.1 L1481.9 460.8 L1468.0 458.4 L1456.3 449.1 L1447.0 439.8 L1442.3 467.8 L1440.0 486.4 L1435.3 500.4 L1428.3 516.7 L1416.0 531.0 L1413.1 531.0 L1422.5 517.5 L1426.5 506.8 L1422.5 479.9 L1417.1 473.2 L1398.3 483.9 L1396.3 478.5 L1409.0 455.7 L1406.3 436.9 L1390.2 425.5Z"/><path d="M1413.0 531.0 L1419.0 527.2 L1444.6 523.7 L1467.9 509.7 L1484.2 498.0 L1498.2 491.1 L1502.9 502.7 L1500.6 509.7 L1479.6 526.0 L1456.3 537.7 L1433.0 548.1 L1414.4 540.0 L1408.0 540.0Z"/><path d="M1497.0 495.0 L1495.9 491.1 L1502.9 481.7 L1526.2 477.1 L1544.8 472.4 L1556.5 467.8 L1559.5 476.4 L1557.4 483.8 L1554.1 490.5 L1546.0 494.5 L1535.3 496.5 L1527.2 495.9 L1517.8 493.2 L1507.0 493.8Z"/></g>
<g fill="#fff"><path d="M1468.800 232H1501L1497 240L1490 248L1480 246L1472 240Z" filter="url(#b1)"/></g>
<g fill="#fff" opacity=".85" filter="url(#b1)"><path d="M1086 259.400L1090.900 281.300L1098.700 284.400L1101.800 275L1094 262.500Z"/><path d="M1119 234.400L1123.700 265.600L1125.300 287.500L1130 278.200L1136.200 256.300L1131.500 237.500Z"/><path d="M1060 244L1064 256L1068 252L1065 243Z"/><ellipse cx="794" cy="555" rx="3.500" ry="9" transform="rotate(-20 794 555)"/><ellipse cx="647" cy="586" rx="1.500" ry="3.500" transform="rotate(-25 647 586)"/><ellipse cx="1637" cy="290" rx="4" ry="3"/><ellipse cx="1584" cy="335" rx="6" ry="4" opacity=".7"/><ellipse cx="1296" cy="312" rx="4" ry="3" opacity=".7"/></g>
<g fill="none" stroke="#fff" stroke-linecap="round" stroke-linejoin="round" filter="url(#b2)"><path d="M1673 384L1690 360L1706 339" stroke-width="6" opacity=".8"/><path d="M1560 601L1563 625L1561 645L1564 664" stroke-width="3" opacity=".7"/><path d="M1583 608L1591 622" stroke-width="3" opacity=".6"/><path d="M574 322L560 306L545 292L532 285" stroke-width="4" opacity=".55"/><path d="M476 255L500 268L515 277" stroke-width="4" opacity=".5"/><path d="M1442 417L1470 436L1481 458" stroke-width="9" opacity=".55"/><path d="M1448 445L1444 500" stroke-width="8" opacity=".5"/><path d="M1610 262L1626 240" stroke-width="3" opacity=".7"/></g>
<!--MISC-->
<g fill="none" stroke="#f3f3f3" stroke-width="2.8" stroke-linejoin="round"><path d="M570.5 322.2 L1161.3 322.2"/><path d="M722.7 322.2 L722.7 353.9 L730.0 371.0 L751.0 392.6 L758.4 395.7 L755.2 427.5 L766.7 424.5 L777.2 448.3 L786.7 460.1 L801.4 460.1 L818.2 458.7 L827.6 460.7"/><path d="M827.6 445.4 L974.5 445.4"/><path d="M827.6 445.4 L827.6 560.2 L869.6 560.2"/><path d="M974.5 322.2 L974.5 560.2"/><path d="M974.5 417.2 L1131.7 417.2"/><path d="M974.5 503.7 L1091.0 503.7 L1101.5 510.3 L1116.2 507.7 L1128.8 515.2 L1134.0 518.3"/><path d="M869.6 560.2 L1016.5 560.2 L1016.5 587.8 L1158.1 587.8"/><path d="M1016.5 587.8 L1016.5 668.3"/><path d="M869.6 668.3 L1172.4 668.3"/><path d="M764.6 668.3 L869.6 668.3"/><path d="M996.5 668.3 L996.5 681.4"/><path d="M869.6 560.2 L869.6 812.2 L887.4 812.2 L887.4 801.1 L922.5 801.1"/><path d="M920.6 795.7 L995.3 795.7"/><path d="M764.6 532.2 L764.6 691.8 L750.0 691.8 L753.1 717.6 L752.5 720.2"/><path d="M639.8 532.2 L827.6 532.2"/><path d="M750.6 777.8 L748.9 783.3 L827.2 812.2 L869.6 812.2"/><path d="M1117.6 322.2 L1120.4 353.9 L1125.6 384.9 L1130.9 406.3 L1131.7 417.2 L1125.6 427.5 L1134.0 436.4 L1134.0 489.3 L1130.9 512.3 L1134.0 518.3 L1141.3 540.6 L1145.5 560.2 L1148.3 571.8 L1158.1 587.8 L1166.5 593.3 L1172.8 612.3 L1172.4 681.4 L1176.4 709.9 L1175.3 754.7 L1184.6 757.0 L1184.6 770.3"/><path d="M1134.0 489.3 L1243.8 489.3"/><path d="M1148.3 571.8 L1233.1 571.3 L1239.6 577.4"/><path d="M1172.4 681.4 L1266.2 681.4 L1261.6 694.4 L1275.7 694.4"/><path d="M1184.6 770.3 L1244.8 770.3"/><path d="M1225.3 392.6 L1221.1 412.4 L1208.5 427.5 L1211.6 452.8 L1229.5 474.8 L1243.8 489.3 L1247.3 512.3 L1255.9 518.0"/><path d="M1287.6 668.3 L1279.9 681.4 L1275.7 694.4 L1267.9 717.6 L1263.1 720.2 L1256.8 735.5 L1246.3 755.7 L1244.8 770.8 L1248.4 783.3 L1240.0 805.5 L1235.8 820.3 L1275.0 820.3 L1274.6 832.5 L1279.2 840.3"/><path d="M1328.1 538.9 L1378.5 539.8 L1406.8 539.8"/><path d="M1378.3 539.8 L1378.1 612.3"/><path d="M1310.3 647.1 L1321.8 643.1 L1332.3 644.5 L1342.8 641.8 L1353.3 641.8 L1359.6 633.8 L1365.9 623.1 L1378.1 612.3 L1384.8 612.3 L1391.1 620.4 L1402.6 624.4 L1416.3 622.5 L1424.7 629.8 L1433.1 620.4 L1442.5 612.3 L1454.0 604.2 L1461.4 594.6 L1465.6 576.8 L1468.3 570.2"/><path d="M1468.3 532.2 L1468.3 595.5 L1567.6 595.5 L1567.6 629.5 L1583.1 629.8"/><path d="M1490.1 595.5 L1490.1 609.6 L1500.2 602.8 L1512.8 598.7 L1527.1 606.3 L1514.9 615.0 L1502.9 620.4 L1493.9 629.8 L1486.6 625.8 L1472.9 655.1 L1454.0 661.7 L1437.9 654.0 L1426.8 641.8 L1424.7 629.8"/><path d="M1437.9 654.0 L1422.6 667.0 L1402.0 678.7"/><path d="M1279.9 681.4 L1310.3 681.4 L1310.3 677.4 L1402.0 678.7 L1444.0 679.0 L1565.3 680.1"/><path d="M1263.1 720.2 L1414.2 720.2 L1431.0 715.0 L1457.2 716.3 L1457.2 718.9 L1460.3 724.8 L1486.1 725.3 L1509.6 748.9"/><path d="M1388.6 720.2 L1394.2 709.9 L1414.2 700.8 L1424.7 693.1 L1444.0 679.0"/><path d="M1307.1 720.2 L1301.5 798.1 L1302.9 834.9"/><path d="M1361.7 720.2 L1370.5 774.0 L1374.3 788.2 L1373.2 808.0 L1374.3 820.3"/><path d="M1414.2 720.2 L1408.9 727.8 L1421.5 743.1 L1433.1 755.7 L1447.7 770.8 L1456.1 793.2 L1460.3 794.9"/><path d="M1590.4 550.2 L1581.4 561.0 L1580.0 571.3 L1589.4 582.3 L1582.1 590.5 L1574.7 593.3"/><path d="M1527.1 606.3 L1531.7 612.3 L1540.1 617.7 L1541.1 623.1 L1535.9 631.1 L1544.3 635.1 L1556.9 641.8"/><path d="M1657.6 445.1 L1655.5 457.2 L1646.1 471.9 L1640.8 486.4 L1637.7 503.7 L1635.6 511.4"/><path d="M1620.7 511.4 L1661.8 512.3 L1672.3 507.2"/><path d="M1615.8 531.0 L1651.3 531.6 L1660.1 531.6 L1663.9 546.2"/><path d="M1651.3 531.6 L1651.3 550.4"/><path d="M1674.4 500.8 L1668.7 486.4 L1666.4 436.4 L1680.7 421.4 L1689.1 394.1 L1705.9 371.0"/><path d="M1590.4 445.4 L1657.6 445.1 L1666.4 436.4"/><path d="M1489.3 240.1 L1489.3 367.9 L1498.1 391.1 L1506.5 406.3 L1527.5 409.4 L1538.0 419.9 L1550.6 430.5 L1569.5 433.4 L1586.2 427.5 L1596.7 429.0 L1594.6 443.9"/><path d="M1161.3 322.2 L1161.3 195.6"/><path d="M1030.8 322.5 L1027.0 232.0"/><path d="M849.6 322.2 L849.6 195.6"/><path d="M764.2 322.2 L751.0 302.9 L753.1 280.0 L738.4 266.9 L717.4 246.8 L709.0 230.0"/></g>
<g fill="none" stroke="#b9b9b9" stroke-width="1" stroke-linejoin="round"><path d="M570.5 322.2 L1161.3 322.2"/><path d="M722.7 322.2 L722.7 353.9 L730.0 371.0 L751.0 392.6 L758.4 395.7 L755.2 427.5 L766.7 424.5 L777.2 448.3 L786.7 460.1 L801.4 460.1 L818.2 458.7 L827.6 460.7"/><path d="M827.6 445.4 L974.5 445.4"/><path d="M827.6 445.4 L827.6 560.2 L869.6 560.2"/><path d="M974.5 322.2 L974.5 560.2"/><path d="M974.5 417.2 L1131.7 417.2"/><path d="M974.5 503.7 L1091.0 503.7 L1101.5 510.3 L1116.2 507.7 L1128.8 515.2 L1134.0 518.3"/><path d="M869.6 560.2 L1016.5 560.2 L1016.5 587.8 L1158.1 587.8"/><path d="M1016.5 587.8 L1016.5 668.3"/><path d="M869.6 668.3 L1172.4 668.3"/><path d="M764.6 668.3 L869.6 668.3"/><path d="M996.5 668.3 L996.5 681.4"/><path d="M869.6 560.2 L869.6 812.2 L887.4 812.2 L887.4 801.1 L922.5 801.1"/><path d="M920.6 795.7 L995.3 795.7"/><path d="M764.6 532.2 L764.6 691.8 L750.0 691.8 L753.1 717.6 L752.5 720.2"/><path d="M639.8 532.2 L827.6 532.2"/><path d="M750.6 777.8 L748.9 783.3 L827.2 812.2 L869.6 812.2"/><path d="M1117.6 322.2 L1120.4 353.9 L1125.6 384.9 L1130.9 406.3 L1131.7 417.2 L1125.6 427.5 L1134.0 436.4 L1134.0 489.3 L1130.9 512.3 L1134.0 518.3 L1141.3 540.6 L1145.5 560.2 L1148.3 571.8 L1158.1 587.8 L1166.5 593.3 L1172.8 612.3 L1172.4 681.4 L1176.4 709.9 L1175.3 754.7 L1184.6 757.0 L1184.6 770.3"/><path d="M1134.0 489.3 L1243.8 489.3"/><path d="M1148.3 571.8 L1233.1 571.3 L1239.6 577.4"/><path d="M1172.4 681.4 L1266.2 681.4 L1261.6 694.4 L1275.7 694.4"/><path d="M1184.6 770.3 L1244.8 770.3"/><path d="M1225.3 392.6 L1221.1 412.4 L1208.5 427.5 L1211.6 452.8 L1229.5 474.8 L1243.8 489.3 L1247.3 512.3 L1255.9 518.0"/><path d="M1287.6 668.3 L1279.9 681.4 L1275.7 694.4 L1267.9 717.6 L1263.1 720.2 L1256.8 735.5 L1246.3 755.7 L1244.8 770.8 L1248.4 783.3 L1240.0 805.5 L1235.8 820.3 L1275.0 820.3 L1274.6 832.5 L1279.2 840.3"/><path d="M1328.1 538.9 L1378.5 539.8 L1406.8 539.8"/><path d="M1378.3 539.8 L1378.1 612.3"/><path d="M1310.3 647.1 L1321.8 643.1 L1332.3 644.5 L1342.8 641.8 L1353.3 641.8 L1359.6 633.8 L1365.9 623.1 L1378.1 612.3 L1384.8 612.3 L1391.1 620.4 L1402.6 624.4 L1416.3 622.5 L1424.7 629.8 L1433.1 620.4 L1442.5 612.3 L1454.0 604.2 L1461.4 594.6 L1465.6 576.8 L1468.3 570.2"/><path d="M1468.3 532.2 L1468.3 595.5 L1567.6 595.5 L1567.6 629.5 L1583.1 629.8"/><path d="M1490.1 595.5 L1490.1 609.6 L1500.2 602.8 L1512.8 598.7 L1527.1 606.3 L1514.9 615.0 L1502.9 620.4 L1493.9 629.8 L1486.6 625.8 L1472.9 655.1 L1454.0 661.7 L1437.9 654.0 L1426.8 641.8 L1424.7 629.8"/><path d="M1437.9 654.0 L1422.6 667.0 L1402.0 678.7"/><path d="M1279.9 681.4 L1310.3 681.4 L1310.3 677.4 L1402.0 678.7 L1444.0 679.0 L1565.3 680.1"/><path d="M1263.1 720.2 L1414.2 720.2 L1431.0 715.0 L1457.2 716.3 L1457.2 718.9 L1460.3 724.8 L1486.1 725.3 L1509.6 748.9"/><path d="M1388.6 720.2 L1394.2 709.9 L1414.2 700.8 L1424.7 693.1 L1444.0 679.0"/><path d="M1307.1 720.2 L1301.5 798.1 L1302.9 834.9"/><path d="M1361.7 720.2 L1370.5 774.0 L1374.3 788.2 L1373.2 808.0 L1374.3 820.3"/><path d="M1414.2 720.2 L1408.9 727.8 L1421.5 743.1 L1433.1 755.7 L1447.7 770.8 L1456.1 793.2 L1460.3 794.9"/><path d="M1590.4 550.2 L1581.4 561.0 L1580.0 571.3 L1589.4 582.3 L1582.1 590.5 L1574.7 593.3"/><path d="M1527.1 606.3 L1531.7 612.3 L1540.1 617.7 L1541.1 623.1 L1535.9 631.1 L1544.3 635.1 L1556.9 641.8"/><path d="M1657.6 445.1 L1655.5 457.2 L1646.1 471.9 L1640.8 486.4 L1637.7 503.7 L1635.6 511.4"/><path d="M1620.7 511.4 L1661.8 512.3 L1672.3 507.2"/><path d="M1615.8 531.0 L1651.3 531.6 L1660.1 531.6 L1663.9 546.2"/><path d="M1651.3 531.6 L1651.3 550.4"/><path d="M1674.4 500.8 L1668.7 486.4 L1666.4 436.4 L1680.7 421.4 L1689.1 394.1 L1705.9 371.0"/><path d="M1590.4 445.4 L1657.6 445.1 L1666.4 436.4"/><path d="M1489.3 240.1 L1489.3 367.9 L1498.1 391.1 L1506.5 406.3 L1527.5 409.4 L1538.0 419.9 L1550.6 430.5 L1569.5 433.4 L1586.2 427.5 L1596.7 429.0 L1594.6 443.9"/><path d="M1161.3 322.2 L1161.3 195.6"/><path d="M1030.8 322.5 L1027.0 232.0"/><path d="M849.6 322.2 L849.6 195.6"/><path d="M764.2 322.2 L751.0 302.9 L753.1 280.0 L738.4 266.9 L717.4 246.8 L709.0 230.0"/></g>
<g fill="none" stroke="#d0d0d0" stroke-width=".8"><path d="M869.6 812.2 L874.8 832.5 L879.0 856.7 L872.7 885.5 L881.1 911.6 L883.2 923.3 L893.7 932.7"/><path d="M883.2 923.3 L866.4 928.0 L861.2 932.7"/><path d="M893.7 932.7 L912.6 944.4 L914.7 963.0 L929.4 979.2 L935.7 1002.1 L942.0 1015.8"/><path d="M893.7 932.7 L923.1 925.7 L944.1 921.0 L967.2 925.7 L981.9 923.3 L992.3 904.5 L977.7 885.5 L990.2 868.8 L1002.8 851.9"/><path d="M981.9 923.3 L990.2 944.4 L1004.9 960.7 L1017.5 967.6 L1038.5 967.6 L1042.7 956.0"/><path d="M1063.7 897.4 L1053.2 916.3 L1040.6 925.7 L1042.7 956.0 L1053.2 965.3 L1055.3 986.1 L1065.8 999.8 L1070.0 1015.8"/><path d="M1070.0 902.1 L1065.8 918.6 L1078.4 930.4 L1076.3 949.1 L1063.7 967.6 L1067.9 986.1 L1061.6 1004.4"/><path d="M765.7 892.6 L789.8 892.6"/></g>
<g fill="none" stroke="#9a9a9a" stroke-width="1"><path d="M1161.0 323.0 L1161.0 314.0 L1166.0 313.0 L1171.0 327.0 L1190.0 333.0 L1211.0 340.0 L1220.6 343.8 L1226.3 344.4 L1236.3 353.2 L1250.1 347.6 L1252.6 350.7 L1263.9 350.7 L1270.2 354.5 L1284.0 354.5 L1302.2 345.1 L1376.8 389.0 L1381.9 400.3 L1392.0 403.0 L1396.0 410.0 L1405.7 421.6 L1425.2 435.5 L1433.9 486.6 L1427.8 502.7 L1414.4 536.3 L1421.1 541.7 L1429.2 541.0 L1452.0 526.9 L1480.0 519.5 L1500.3 509.3 L1495.6 493.2 L1499.0 487.1 L1537.3 485.8"/><path d="M1547.4 482.4 L1554.1 473.0 L1562.2 466.3 L1578.0 449.5 L1594.4 442.1 L1600.0 434.0"/></g>
<rect x="1418" y="862" width="58" height="42" fill="#ececec" opacity=".7"/>
<path d="M582.2 323.1 L702.8 323.1 L702.8 404.6 L704.7 416.6 L662.3 416.7 L653.7 418.6 L642.9 421.8 L632.2 425.6 L624.6 425.6 L614.9 427.2 L605.3 425.1 L594.5 428.3 L585.9 427.7 L581.6 418.6 L577.3 411.6 L570.9 410.5 L565.5 408.4 L559.0 407.8 L556.9 409.5 L555.3 404.6 L554.7 396.0 L553.1 387.4 L551.0 376.7 L547.2 361.6 L542.9 353.0 L541.3 343.3 L551.5 346.0 L562.3 348.7 L573.0 349.2 L577.3 351.4 L591.8 353.0 L590.2 345.5 L588.6 336.9 L584.8 331.5Z" fill="#6db7c8" stroke="#4f6f7d" stroke-width=".9" stroke-linejoin="round"/>
<path d="M557.0 409.4 L559.0 407.8 L565.5 408.4 L570.9 410.5 L577.3 411.6 L581.6 418.6 L585.9 427.7 L594.5 428.3 L605.3 425.1 L614.9 427.2 L624.6 425.6 L632.2 425.6 L642.9 421.8 L653.7 418.6 L662.3 416.7 L704.7 416.6 L705.7 418.8 L713.8 426.3 L710.7 436.4 L706.9 445.2 L703.1 452.7 L699.4 460.2 L698.8 465.9 L705.0 470.3 L703.1 477.8 L702.9 532.4 L550.7 532.4 L547.6 520.5 L546.9 512.9 L544.4 507.9 L548.8 495.4 L552.0 485.3 L554.5 462.7 L556.3 443.9 L558.2 425.1 L556.3 416.3Z" fill="#8fcacf" stroke="#4f6f7d" stroke-width=".9" stroke-linejoin="round"/>
<path d="M551.3 532.5 L640.4 532.5 L640.4 616.0 L753.2 719.6 L757.0 727.8 L763.3 737.8 L755.7 745.4 L755.7 754.1 L752.0 762.9 L752.0 770.5 L756.4 773.6 L754.5 778.0 L700.5 782.4 L697.4 775.5 L694.3 767.9 L685.5 759.2 L677.9 751.6 L673.6 750.4 L670.4 745.4 L664.1 744.1 L657.9 740.3 L650.3 735.9 L640.3 733.4 L630.3 732.8 L626.5 727.8 L626.5 719.0 L621.5 712.7 L614.0 702.7 L606.4 691.4 L600.2 683.9 L601.4 675.1 L596.4 668.8 L590.1 662.5 L587.0 652.5 L587.7 650.5 L584.0 644.2 L578.3 639.2 L573.9 630.4 L567.6 624.1 L561.4 615.4 L560.7 601.6 L558.2 591.5 L550.1 582.7 L547.6 576.5 L550.7 567.7 L553.2 557.6 L553.8 547.6 L551.3 538.8ZM631.5 744.0 L635.0 743.2 L638.0 745.5 L634.5 747.5ZM641.0 743.5 L646.0 743.0 L650.0 744.5 L645.0 746.5ZM669.0 758.5 L672.0 759.5 L676.0 764.0 L672.5 763.5ZM649.0 763.5 L653.0 765.0 L651.0 765.5ZM669.0 770.0 L672.0 772.0 L675.0 776.0 L671.5 774.5Z" fill="#2c5985" stroke="#4f6f7d" stroke-width=".9" stroke-linejoin="round"/>
<path d="M869.6 560.2 L1016.5 560.2 L1016.5 668.4 L869.6 668.4Z" fill="#a8dad4" stroke="#4f6f7d" stroke-width=".9" stroke-linejoin="round"/>
<path d="M995.8 681.6 L1059.5 681.6 L1059.5 730.4 L1063.4 734.7 L1073.6 735.5 L1077.9 739.8 L1087.2 742.3 L1097.4 743.2 L1104.3 749.1 L1119.6 751.7 L1126.4 747.4 L1136.6 753.4 L1145.1 749.1 L1158.7 747.4 L1172.3 754.3 L1184.3 756.8 L1184.6 796.0 L1189.4 804.5 L1194.5 818.1 L1191.9 830.0 L1190.9 841.7 L1186.6 851.9 L1179.1 855.5 L1173.4 856.3 L1164.7 862.1 L1155.9 869.4 L1144.3 875.2 L1132.6 881.1 L1122.4 888.4 L1115.1 898.6 L1112.2 908.8 L1111.4 920.5 L1115.1 932.1 L1118.7 939.4 L1114.3 943.1 L1107.8 939.4 L1097.6 938.0 L1085.9 932.1 L1077.1 926.3 L1071.3 913.2 L1068.4 901.5 L1061.1 892.7 L1052.3 881.1 L1045.0 867.2 L1036.3 858.5 L1027.5 850.4 L1011.5 848.2 L1004.2 851.9 L999.8 862.1 L992.5 869.1 L982.3 864.3 L970.6 856.3 L961.9 843.1 L954.6 830.0 L944.3 821.5 L934.0 811.3 L925.5 802.8 L920.4 795.6 L995.8 795.6Z" fill="#b9e3d6" stroke="#4f6f7d" stroke-width=".9" stroke-linejoin="round"/>
<path d="M1255.6 518.5 L1315.3 518.5 L1316.1 527.4 L1321.0 538.7 L1321.0 606.5 L1319.4 612.9 L1321.3 622.6 L1316.1 633.9 L1311.3 640.3 L1309.7 654.8 L1303.2 658.1 L1301.6 666.1 L1295.2 663.7 L1287.1 664.5 L1283.9 668.5 L1279.8 661.3 L1277.4 651.6 L1271.0 643.5 L1261.3 633.9 L1265.3 622.6 L1258.1 617.7 L1254.0 611.3 L1245.2 601.6 L1238.7 591.9 L1237.4 583.9 L1239.5 574.2 L1246.8 564.5 L1248.4 558.1 L1245.5 551.6 L1253.2 546.8 L1261.3 543.5 L1265.3 533.9 L1261.3 525.8Z" fill="#3785ab" stroke="#4f6f7d" stroke-width=".9" stroke-linejoin="round"/>
<path d="M1260.2 398.8 L1275.2 390.2 L1287.8 386.5 L1295.3 380.2 L1305.3 372.0 L1312.8 370.2 L1316.6 372.7 L1310.3 376.4 L1305.3 384.0 L1302.2 390.9 L1307.8 387.7 L1315.4 389.6 L1320.4 394.0 L1324.2 399.0 L1330.4 400.9 L1336.7 402.8 L1337.9 399.6 L1339.8 401.5 L1345.5 398.4 L1355.5 395.2 L1365.5 394.0 L1373.7 392.4 L1375.0 397.8 L1381.9 402.1 L1391.9 400.3 L1393.8 407.8 L1398.2 412.8 L1403.2 412.2 L1406.6 415.9 L1403.2 418.5 L1395.7 417.2 L1383.1 415.9 L1379.3 420.3 L1374.3 416.6 L1368.1 414.1 L1363.0 413.4 L1356.8 416.6 L1350.5 417.2 L1345.5 420.3 L1340.5 426.6 L1337.9 426.6 L1340.5 420.3 L1335.4 422.8 L1332.3 426.0 L1331.7 420.3 L1327.9 426.6 L1322.9 436.7 L1317.9 442.9 L1316.0 439.2 L1316.6 434.1 L1313.5 434.1 L1314.1 427.9 L1310.3 422.8 L1307.8 417.8 L1297.8 415.9 L1287.8 411.6 L1275.2 406.5 L1266.4 404.0ZM1379.5 422.8 L1372.7 427.5 L1374.1 434.2 L1367.4 436.9 L1364.7 446.3 L1362.7 451.7 L1360.6 449.0 L1361.3 442.3 L1358.0 444.9 L1352.6 449.0 L1347.2 455.7 L1345.9 466.5 L1342.5 474.5 L1343.2 482.6 L1341.8 488.0 L1345.9 497.4 L1348.5 509.5 L1347.2 520.2 L1343.2 529.6 L1339.1 536.3 L1335.8 539.7 L1406.3 540.1 L1413.1 531.0 L1414.4 525.6 L1422.5 517.5 L1426.5 506.8 L1425.2 493.3 L1422.5 479.9 L1417.1 473.2 L1409.0 477.2 L1403.7 483.3 L1398.3 483.9 L1396.3 478.5 L1401.0 474.5 L1405.0 467.8 L1409.0 455.7 L1407.7 444.9 L1406.3 436.9 L1398.3 430.2 L1390.2 425.5ZM1284.6 358.9 L1287.0 355.5 L1294.0 351.5 L1301.6 348.8 L1299.0 352.5 L1291.0 357.0 L1286.0 359.5ZM1359.5 428.5 L1361.5 424.5 L1362.5 427.0 L1361.0 431.0ZM1383.0 421.5 L1386.0 422.5 L1384.5 424.0ZM1351.0 440.5 L1352.5 441.0 L1352.0 443.0Z" fill="#4da5bd" stroke="#4f6f7d" stroke-width=".9" stroke-linejoin="round"/>
<path d="M1483.5 532.8 L1483.5 525.4 L1500.3 510.6 L1501.7 506.6 L1498.3 502.6 L1498.3 496.5 L1507.0 493.8 L1517.8 493.2 L1527.2 495.9 L1535.3 496.5 L1546.0 494.5 L1554.1 490.5 L1557.4 483.8 L1556.1 479.1 L1559.5 476.4 L1554.1 473.0 L1562.2 466.3 L1570.2 456.9 L1578.3 449.5 L1585.0 446.1 L1617.9 445.9 L1617.9 454.2 L1619.3 460.9 L1617.3 470.3 L1617.5 483.8 L1619.7 487.8 L1619.3 510.6 L1616.6 524.1 L1614.6 537.5 L1613.9 553.7 L1609.9 564.4 L1604.5 571.1 L1599.1 573.1 L1601.1 569.8 L1604.5 565.8 L1605.8 556.3 L1604.5 554.3 L1598.4 549.6 L1589.0 546.9 L1582.3 544.2 L1581.6 537.5 L1577.6 533.5 L1575.6 532.8ZM1601.0 573.0 L1604.5 568.5 L1607.0 565.5 L1612.0 563.8 L1621.3 562.2 L1629.4 560.5 L1634.7 559.0 L1639.2 556.8 L1640.3 559.2 L1648.5 557.9 L1649.0 559.0 L1640.1 561.9 L1633.4 564.6 L1626.7 567.3 L1617.3 570.8 L1609.2 573.3 L1604.0 574.0Z" fill="#60b0c6" stroke="#4f6f7d" stroke-width=".9" stroke-linejoin="round"/>
<path d="M1318.6 820.3 L1373.1 820.3 L1376.0 826.9 L1431.9 830.8 L1434.1 835.1 L1436.2 832.9 L1435.5 825.8 L1438.4 824.3 L1443.4 826.9 L1448.4 827.2 L1449.1 835.8 L1452.0 848.7 L1457.7 861.6 L1463.4 873.1 L1467.0 881.7 L1466.3 887.4 L1470.6 898.9 L1474.9 910.4 L1477.8 920.4 L1477.1 933.3 L1474.9 944.8 L1472.0 954.8 L1469.9 959.8 L1464.9 958.4 L1457.7 960.5 L1454.1 956.2 L1452.0 947.6 L1449.1 943.3 L1443.4 939.0 L1439.8 933.3 L1437.6 924.7 L1434.1 926.1 L1432.6 919.0 L1429.0 914.7 L1424.7 907.5 L1422.6 903.2 L1426.9 897.5 L1421.1 896.0 L1419.7 887.4 L1421.1 878.8 L1419.0 867.3 L1414.7 863.0 L1409.0 855.9 L1403.2 848.7 L1396.1 843.7 L1388.9 843.7 L1386.0 847.3 L1376.0 850.1 L1370.3 853.0 L1366.7 851.6 L1363.1 844.4 L1357.3 838.7 L1348.7 834.4 L1340.1 833.7 L1328.7 833.7 L1321.5 836.5 L1322.9 830.1 L1320.1 825.8ZM1438.5 973.0 L1441.5 971.8 L1442.0 973.0 L1439.0 974.0ZM1446.0 969.8 L1449.5 968.8 L1450.0 970.3 L1447.0 971.2Z" fill="#2d6896" stroke="#4f6f7d" stroke-width=".9" stroke-linejoin="round"/>
<path d="M1163.500 853L1166 850.500L1167.500 852.500L1170 849.500L1171 852.500L1168 856.500L1165.500 860L1163.500 857.500Z" fill="#fff" stroke="#6f8f88" stroke-width=".5"/>
<g font-family="Liberation Sans, sans-serif" font-size="11.5" fill="#a3a3a3" text-anchor="middle" letter-spacing=".3">
<text x="855" y="386">Montana</text>
<text x="755" y="473">Idaho</text>
<text x="902" y="505">Wyoming</text>
<text x="708" y="609">Nevada</text>
<text x="813" y="609">Utah</text>
<text x="818" y="734">Arizona</text>
<text x="933" y="734">New Mexico</text>
<text x="1059" y="364">North</text>
<text x="1059" y="377">Dakota</text>
<text x="1054" y="455">South</text>
<text x="1054" y="468">Dakota</text>
<text x="1064" y="547">Nebraska</text>
<text x="1090" y="629">Kansas</text>
<text x="1111" y="707">Oklahoma</text>
<text x="1180" y="409">Minnesota</text>
<text x="1195" y="533">Iowa</text>
<text x="1216" y="636">Missouri</text>
<text x="1216" y="727">Arkansas</text>
<text x="1221" y="829">Louisiana</text>
<text x="1268" y="461">Wisconsin</text>
<text x="1347" y="588">Indiana</text>
<text x="1415" y="582">Ohio</text>
<text x="1376" y="648">Kentucky</text>
<text x="1347" y="701">Tennessee</text>
<text x="1273" y="759">Mississippi</text>
<text x="1337" y="778">Alabama</text>
<text x="1405" y="792">Georgia</text>
<text x="1457" y="740">South</text>
<text x="1457" y="753">Carolina</text>
<text x="1478" y="701">North</text>
<text x="1478" y="714">Carolina</text>
<text x="1514" y="649">Virginia</text>
<text x="1462" y="619">West</text>
<text x="1462" y="632">Virginia</text>
<text x="1522" y="565">Pennsylvania</text>
<text x="1630" y="471">VT</text>
<text x="1642" y="523">MA</text>
<text x="1631" y="544">CT</text>
<text x="1658" y="547">RI</text>
<text x="1594" y="584">NJ</text>
<text x="1539" y="605">MD</text>
<text x="1574" y="625">DE</text>
<text x="1379" y="260">Ontario</text>
<text x="745" y="838">Baja</text>
<text x="745" y="851">California</text>
<text x="835" y="861">Sonora</text>
<text x="933" y="881">Chihuahua</text>
<text x="1018" y="902">Coahuila de</text>
<text x="1018" y="915">Zaragoza</text>
<text x="1059" y="947">Nuevo León</text>
<text x="1088" y="986">Tamaulipas</text>
<text x="902" y="963">Sinaloa</text>
<text x="958" y="967">Durango</text>
<text x="811" y="937">Baja California</text>
<text x="811" y="950">Sur</text>
<text x="955" y="1033">Nayarit</text>
<text x="1289" y="1058">Yucatán</text>
<text x="1688" y="432" text-anchor="start">Maine</text>
</g>
<text x="1084" y="576.76" font-family="Liberation Sans, sans-serif" font-size="16" fill="#8f8f8f" text-anchor="middle" letter-spacing=".4">United</text>
<text x="1084" y="596.76" font-family="Liberation Sans, sans-serif" font-size="16" fill="#8f8f8f" text-anchor="middle" letter-spacing=".4">States</text>
<text x="1024" y="1011.12" font-family="Liberation Sans, sans-serif" font-size="17" fill="#8f8f8f" text-anchor="middle" letter-spacing=".4">Mexico</text>
<text x="1552" y="1063.68" font-family="Liberation Sans, sans-serif" font-size="13" fill="#8f8f8f" text-anchor="middle" letter-spacing=".4">Cuba</text>
<text x="629" y="364.7" font-family="Liberation Sans, sans-serif" font-size="14.5" font-weight="bold" fill="#3f86a6" opacity="1" text-anchor="middle" letter-spacing=".3">114,722</text>
<text x="629" y="384.7" font-family="Liberation Sans, sans-serif" font-size="14.5" font-weight="bold" fill="#3f86a6" opacity="1" text-anchor="middle" letter-spacing=".3">Washington</text>
<text x="629" y="470.7" font-family="Liberation Sans, sans-serif" font-size="14.5" font-weight="bold" fill="#4a7fae" opacity="1" text-anchor="middle" letter-spacing=".3">82,331</text>
<text x="629" y="490.7" font-family="Liberation Sans, sans-serif" font-size="14.5" font-weight="bold" fill="#4a7fae" opacity="1" text-anchor="middle" letter-spacing=".3">Oregon</text>
<text x="645" y="656.7" font-family="Liberation Sans, sans-serif" font-size="14.5" font-weight="bold" fill="#4775a5" opacity="1" text-anchor="middle" letter-spacing=".3">275,450</text>
<text x="645" y="676.7" font-family="Liberation Sans, sans-serif" font-size="14.5" font-weight="bold" fill="#4775a5" opacity="1" text-anchor="middle" letter-spacing=".3">California</text>
<text x="943" y="609.7" font-family="Liberation Sans, sans-serif" font-size="14.5" font-weight="bold" fill="#4577a8" opacity="1" text-anchor="middle" letter-spacing=".3">53,332</text>
<text x="943" y="629.7" font-family="Liberation Sans, sans-serif" font-size="14.5" font-weight="bold" fill="#4577a8" opacity="1" text-anchor="middle" letter-spacing=".3">Colorado</text>
<text x="1074" y="808.7" font-family="Liberation Sans, sans-serif" font-size="14.5" font-weight="bold" fill="#4577a8" opacity="1" text-anchor="middle" letter-spacing=".3">33,441</text>
<text x="1074" y="828.7" font-family="Liberation Sans, sans-serif" font-size="14.5" font-weight="bold" fill="#4577a8" opacity="1" text-anchor="middle" letter-spacing=".3">Texas</text>
<text x="1381" y="495.7" font-family="Liberation Sans, sans-serif" font-size="14.5" font-weight="bold" fill="#4386ae" opacity="1" text-anchor="middle" letter-spacing=".3">145,871</text>
<text x="1381" y="515.7" font-family="Liberation Sans, sans-serif" font-size="14.5" font-weight="bold" fill="#4386ae" opacity="1" text-anchor="middle" letter-spacing=".3">Michigan</text>
<text x="1572" y="498.7" font-family="Liberation Sans, sans-serif" font-size="14.5" font-weight="bold" fill="#3d7fa6" opacity="1" text-anchor="middle" letter-spacing=".3">126,620</text>
<text x="1572" y="518.7" font-family="Liberation Sans, sans-serif" font-size="14.5" font-weight="bold" fill="#3d7fa6" opacity="1" text-anchor="middle" letter-spacing=".3">New York</text>
<text x="1446" y="877.7" font-family="Liberation Sans, sans-serif" font-size="14.5" font-weight="bold" fill="#4a86c0" opacity="0.75" text-anchor="middle" letter-spacing=".3">251,997</text>
<text x="1446" y="897.7" font-family="Liberation Sans, sans-serif" font-size="14.5" font-weight="bold" fill="#4a86c0" opacity="0.75" text-anchor="middle" letter-spacing=".3">Florida</text>
<text x="1282" y="590.7" font-family="Liberation Sans, sans-serif" font-size="14.5" font-weight="bold" fill="#3a80ac" opacity="0.3" text-anchor="middle" letter-spacing=".3">183,562</text>
<text x="1282" y="610.7" font-family="Liberation Sans, sans-serif" font-size="14.5" font-weight="bold" fill="#3a80ac" opacity="0.3" text-anchor="middle" letter-spacing=".3">Illinois</text>
<g fill="none" stroke="#fff" stroke-width="1.300" stroke-linecap="round" stroke-linejoin="round"><path d="M585.500 352.500L588 356L590 355L592.500 362L591 366L593.500 369L590.500 374L588 373L586 379L583.500 381"/></g>
<g fill="none" stroke="#6a8f9c" stroke-width=".8" stroke-linecap="round" stroke-linejoin="round"><path d="M581 356L580 362L577 369L575 376L576 383L578.500 378L581 371"/><path d="M589 366L587 372L584.500 377"/></g>
<g fill="#5fae9f" stroke="#5a8a90" stroke-width=".5"><path d="M577.500 333.500L581.500 331L583 334L580 336.500Z"/><path d="M574.500 337.500L577.500 335.500L579.500 339L576 341Z"/><path d="M585 338L586.500 344L588.500 350L587 343Z"/></g>
</svg>
<span class="a" style="left:481px;top:1046px;font-size:13px;color:#444;line-height:15px">© 2026 Mapbox © OpenStreetMap</span>
<span class="a" style="left:853px;top:1011px;font-size:57px;font-weight:bold;color:#000;opacity:.085;line-height:60px;transform:scaleX(.72);transform-origin:0 0">C</span>
<span class="a" style="left:895px;top:1011px;font-size:57px;font-weight:bold;color:#000;opacity:.085;line-height:60px;transform:scaleX(1.4);transform-origin:0 0">n</span>
<div class="a card" style="left:1720px;top:181px;width:194px;height:81px;background:#fafafa"></div>
<span class="a t15" style="left:1728px;top:191px;color:#444">SUM(Total Revenue)</span>
<div class="a" style="left:1725px;top:221px;width:184px;height:15px;box-shadow:inset 0 0 0 1px rgba(60,80,90,.25);background:linear-gradient(90deg,#b9e2d6 0%,#7cc0c8 35%,#4a9bb6 65%,#2a5783 100%)"></div>
<span class="a t15" style="left:1725px;top:240px;color:#444">33,441</span><span class="a t15" style="right:11px;top:240px;color:#444">275,450</span>
<div class="a" style="left:0;top:1077px;width:1919px;height:39px;background:#e9e9e9;border-top:1px solid #d0d0d0">
<div class="btab" style="left:0px;width:163px;padding-left:25px;"><svg style="position:absolute;left:10px;top:11px" width="9" height="12" viewBox="0 0 9 12" fill="none" stroke="#555" stroke-width="1"><rect x="1" y="1" width="7" height="10" rx="2.2"/><path d="M1 3.600h7"/></svg>Data Source</div>
<div class="btab" style="left:163px;width:167px;">Revenue by Category</div>
<div class="btab" style="left:330px;width:236px;">Total Orders By Product Name</div>
<div class="btab" style="left:566px;width:45px;background:#f8f8f8;color:#222;font-weight:bold;letter-spacing:-.1px;height:37px;">Map</div>
<div class="btab" style="left:611px;width:155px;padding-left:25px;"><svg style="position:absolute;left:9px;top:12px" width="11" height="11" viewBox="0 0 11 11" fill="none" stroke="#555" stroke-width="1"><rect x=".5" y=".5" width="10" height="10"/><path d="M5.5 .5v10M.5 5.500h10"/></svg>Sales Dashboard</div>
<div class="btab" style="left:766px;width:123px;padding-left:25px;"><svg style="position:absolute;left:9px;top:12px" width="11" height="11" viewBox="0 0 11 11" fill="none" stroke="#555" stroke-width="1"><rect x=".5" y=".5" width="10" height="10"/><path d="M5.5 .5v10M.5 5.500h10"/></svg>Dashboard 2</div>
<div class="btab" style="left:889px;width:115px;">Dynamic card</div>
<div class="btab" style="left:1004px;width:152px;">Metric by Category</div>
<div class="btab" style="left:1156px;width:112px;">Top Products</div>
<div class="btab" style="left:1268px;width:135px;">Category By Age</div>
<div class="btab" style="left:1403px;width:149px;">Revenue vs Orders</div>
<div class="btab" style="left:1552px;width:148px;">Profit By Category</div>
<div class="btab" style="left:1700px;width:124px;letter-spacing:0;">Sales By Gender</div>
<svg style="position:absolute;left:1824px;top:0" width="95" height="36" viewBox="0 0 95 36" fill="none" stroke="#444" stroke-width="1.1"><path d="M31.500 0v36M63.500 0v36" stroke="#cfcfcf"/><rect x="9.500" y="11.500" width="11" height="10"/><path d="M12 19v-3M14.500 19v-5M17 19v-2" /><path d="M20.500 19v6M17.500 22h6" stroke-width="1.600"/><rect x="40.500" y="11.500" width="11" height="10"/><path d="M46 11.500v10M40.500 16.500h11"/><path d="M52 19v6M49 22h6" stroke-width="1.600"/><path d="M72.500 11.500h4.500l1.500 1.500 1.500-1.500h4.500v9.500h-4.500l-1.500 1.500-1.500-1.500h-4.500z"/><path d="M85 19v6M82 22h6" stroke-width="1.600"/></svg>
</div>
</body></html>
